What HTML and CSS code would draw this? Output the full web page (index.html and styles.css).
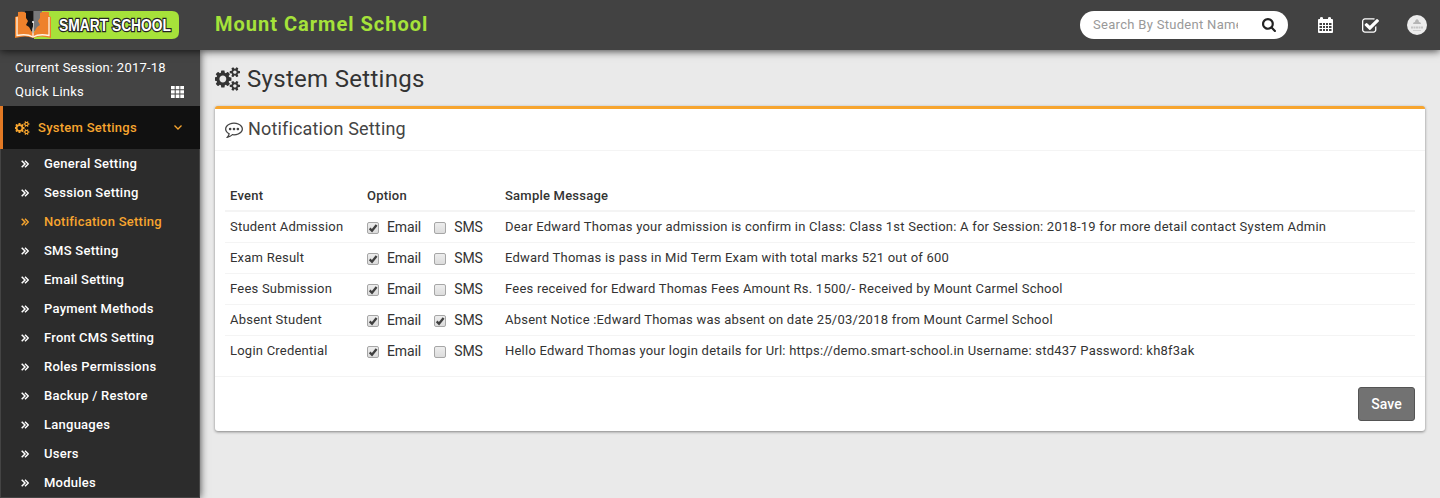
FILE: index.html
```html
<!DOCTYPE html>
<html lang="en">
<head>
<meta charset="utf-8">
<title>System Settings</title>
<link rel="stylesheet" href="styles.css">
</head>
<body>
<svg class="defs" width="0" height="0" aria-hidden="true">
  <symbol id="cogs" viewBox="0 0 1920 1792"><path d="M832 896q0-106-75-181t-181-75-181 75-75 181 75 181 181 75 181-75 75-181zm768 512q0-52-38-90t-90-38-90 38-38 90q0 53 37.500 90.500t90.500 37.500 90.500-37.500 37.500-90.500zm0-1024q0-52-38-90t-90-38-90 38-38 90q0 53 37.500 90.500t90.500 37.500 90.500-37.500 37.500-90.500zm-384 421v185q0 10-7 19.500t-16 10.500l-155 24q-11 35-32 76 34 48 90 115 7 11 7 20 0 12-7 19-23 30-82.500 89.500t-78.500 59.500q-11 0-21-7l-115-90q-37 19-77 31-11 108-23 155-7 24-30 24h-186q-11 0-20-7.500t-10-17.500l-23-153q-34-10-75-31l-118 89q-7 7-20 7-11 0-21-8-144-133-144-160 0-9 7-19 10-14 41-53t47-61q-23-44-35-82l-152-24q-10-1-17-9.500t-7-19.500v-185q0-10 7-19.500t16-10.500l155-24q11-35 32-76-34-48-90-115-7-11-7-20 0-12 7-20 22-30 82-89t79-59q11 0 21 7l115 90q34-18 77-32 11-108 23-154 7-24 30-24h186q11 0 20 7.500t10 17.500l23 153q34 10 75 31l118-89q8-7 20-7 11 0 21 8 144 133 144 160 0 8-7 19-12 16-42 54t-45 60q23 48 34 82l152 23q10 2 17 10.500t7 19.500zm640 533v140q0 16-149 31-12 27-30 52 51 113 51 138 0 4-4 7-122 71-124 71-8 0-46-47t-52-68q-20 2-30 2t-30-2q-14 21-52 68t-46 47q-2 0-124-71-4-3-4-7 0-25 51-138-18-25-30-52-149-15-149-31v-140q0-16 149-31 13-29 30-52-51-113-51-138 0-4 4-7 4-2 35-20t59-34 30-16q8 0 46 46.500t52 67.500q20-2 30-2t30 2q51-71 92-112l6-2q4 0 124 70 4 3 4 7 0 25-51 138 17 23 30 52 149 15 149 31zm0-1024v140q0 16-149 31-12 27-30 52 51 113 51 138 0 4-4 7-122 71-124 71-8 0-46-47t-52-68q-20 2-30 2t-30-2q-14 21-52 68t-46 47q-2 0-124-71-4-3-4-7 0-25 51-138-18-25-30-52-149-15-149-31v-140q0-16 149-31 13-29 30-52-51-113-51-138 0-4 4-7 4-2 35-20t59-34 30-16q8 0 46 46.500t52 67.500q20-2 30-2t30 2q51-71 92-112l6-2q4 0 124 70 4 3 4 7 0 25-51 138 17 23 30 52 149 15 149 31z"/></symbol>
  <symbol id="double-right" viewBox="0 0 8 8"><path d="M.7.7 4 4 .7 7.300M4 .7 7.300 4 4 7.300" fill="none" stroke="currentColor" stroke-width="1.500"/></symbol>
  <symbol id="tick" viewBox="0 0 12 12"><path d="M2.700 6.400 5 8.700 9.600 3" fill="none" stroke="#404040" stroke-width="2.300"/></symbol>
</svg>

<header class="topbar">
  <a class="brand">
    <svg class="logo" width="166" height="30" viewBox="0 0 166 30">
      <path d="M20 1h138q7 0 7 7v14q0 7-7 7H20z" fill="#a6e23a"/>
      <path d="M11 1h8.500v20H11z" fill="#171717"/>
      <path d="M19.500 1H28v20h-8.500z" fill="#78797b"/>
      <path d="M4 2q6-1 8 1v5l2 3-2 4 3 2 4 7 4-7 3-2-2-4 2-3V3q3-2 9-1v4l2 1v21q-11-3-18 0-7-3-18 0V7l3-1z" fill="#ee812b"/>
      <path d="M3 7v18.500q10-2 16 1.500 6-3.500 16-1.500V7M19 12v14" fill="none" stroke="#fff4e5" stroke-width="1.300"/>
      <path d="M16 11h3v8z" fill="#171717"/>
      <circle cx="19" cy="12" r="1" fill="#fff"/>
      <text x="45" y="21" textLength="112" lengthAdjust="spacingAndGlyphs" class="logo-text">SMART SCHOOL</text>
    </svg>
  </a>
  <div class="school">Mount Carmel School</div>
  <div class="tools">
    <div class="search"><span class="search-text">Search By Student Name</span>
      <svg width="14" height="14" viewBox="64 128 1664 1664"><path fill="#222" d="M1216 832q0-185-131.500-316.500t-316.500-131.500-316.500 131.500-131.500 316.500 131.500 316.500 316.500 131.500 316.500-131.500 131.500-316.500zm512 832q0 52-38 90t-90 38q-54 0-90-38l-343-342q-179 124-399 124-143 0-273.500-55.500t-225-150-150-225-55.500-273.500 55.500-273.500 150-225 225-150 273.500-55.500 273.500 55.500 225 150 150 225 55.500 273.500q0 220-124 399l343 343q37 37 37 90z"/></svg>
    </div>
    <svg class="calendar" width="15" height="16" viewBox="0 0 15 16"><path fill="#fff" fill-rule="evenodd" d="M1 2h1V1q0-1 1.500-1T5 1v1h5V1q0-1 1.500-1T13 1v1h1q1 0 1 1v12q0 1-1 1H1q-1 0-1-1V3q0-1 1-1zM1.500 6v2H4V6zM5 6v2h2V6zm3 0v2h2V6zm3 0v2h2.500V6zM1.500 9v2H4V9zM5 9v2h2V9zm3 0v2h2V9zm3 0v2h2.500V9zM1.500 12v2H4v-2zM5 12v2h2v-2zm3 0v2h2v-2zm3 0v2h2.500v-2z"/></svg>
    <svg class="task" width="17" height="15" viewBox="64 128 1664 1408"><path fill="#fff" d="M1472 930v318q0 119-84.500 203.500t-203.500 84.500h-832q-119 0-203.500-84.500t-84.500-203.500v-832q0-119 84.500-203.500t203.500-84.500h832q63 0 117 25 15 7 18 23 3 17-9 29l-49 49q-10 10-23 10-3 0-9-2-23-6-45-6h-832q-66 0-113 47t-47 113v832q0 66 47 113t113 47h832q66 0 113-47t47-113v-254q0-13 9-22l64-64q10-10 23-10 6 0 12 3 20 8 20 29zm231-489l-814 814q-24 24-57 24t-57-24l-430-430q-24-24-24-57t24-57l110-110q24-24 57-24t57 24l263 263 647-647q24-24 57-24t57 24l110 110q24 24 24 57t-24 57z"/></svg>
    <svg class="avatar" width="20" height="20" viewBox="0 0 20 20"><circle cx="10" cy="10" r="10" fill="#ececec"/><path d="M6 9q0-2 2-2 0-2 2-3 2 1 2 3 2 0 2 2z" fill="#b5b5b5"/><path d="M4 12.500h12" stroke="#c4c4c4" stroke-width="1.800" stroke-dasharray="2 .5"/><path d="M6 15.500h8" stroke="#d0d0d0"/></svg>
  </div>
</header>

<div class="shell">
  <aside class="sidebar">
    <div class="session">
      <div class="session-row">Current Session: 2017-18</div>
      <div class="session-row">Quick Links
        <svg width="13" height="12" viewBox="0 0 13 12"><path fill="#fff" d="M0 0h3.700v3.300H0zM4.700 0h3.700v3.300H4.700zM9.300 0H13v3.300H9.300zM0 4.300h3.700v3.300H0zM4.700 4.300h3.700v3.300H4.700zM9.300 4.300H13v3.300H9.300zM0 8.600h3.700V12H0zM4.700 8.600h3.700V12H4.700zM9.300 8.600H13V12H9.300z"/></svg>
      </div>
    </div>
    <div class="group">
      <svg class="group-icon" width="15" height="14"><use href="#cogs"/></svg>
      <span class="group-name">System Settings</span>
      <svg width="8" height="5" viewBox="0 0 8 5"><path d="M.5.5 4 4 7.500.5" fill="none" stroke="currentColor" stroke-width="1.300"/></svg>
    </div>
    <ul class="menu">
      <li><svg width="8" height="8"><use href="#double-right"/></svg>General Setting</li>
      <li><svg width="8" height="8"><use href="#double-right"/></svg>Session Setting</li>
      <li class="current"><svg width="8" height="8"><use href="#double-right"/></svg>Notification Setting</li>
      <li><svg width="8" height="8"><use href="#double-right"/></svg>SMS Setting</li>
      <li><svg width="8" height="8"><use href="#double-right"/></svg>Email Setting</li>
      <li><svg width="8" height="8"><use href="#double-right"/></svg>Payment Methods</li>
      <li><svg width="8" height="8"><use href="#double-right"/></svg>Front CMS Setting</li>
      <li><svg width="8" height="8"><use href="#double-right"/></svg>Roles Permissions</li>
      <li><svg width="8" height="8"><use href="#double-right"/></svg>Backup / Restore</li>
      <li><svg width="8" height="8"><use href="#double-right"/></svg>Languages</li>
      <li><svg width="8" height="8"><use href="#double-right"/></svg>Users</li>
      <li><svg width="8" height="8"><use href="#double-right"/></svg>Modules</li>
    </ul>
  </aside>

  <main class="content">
    <h1 class="page-title"><svg width="26" height="24"><use href="#cogs"/></svg>System Settings</h1>
    <section class="box">
      <h2 class="box-title"><svg width="18" height="18" viewBox="0 0 1792 1792"><path fill="currentColor" d="M640 896q0 53-37.500 90.500t-90.500 37.500-90.500-37.500-37.500-90.500 37.500-90.500 90.500-37.500 90.500 37.500 37.500 90.500zm384 0q0 53-37.500 90.500t-90.500 37.500-90.500-37.500-37.500-90.500 37.500-90.500 90.500-37.500 90.500 37.500 37.500 90.500zm384 0q0 53-37.500 90.500t-90.500 37.500-90.500-37.500-37.500-90.500 37.500-90.500 90.500-37.500 90.500 37.500 37.500 90.500zm-512-512q-204 0-381.500 69.500t-282 187.500-104.500 255q0 112 71.500 213.500t201.500 175.500l87 50-27 96q-24 91-70 172 152-63 275-171l43-38 57 6q69 8 130 8 204 0 381.500-69.500t282-187.500 104.500-255-104.500-255-282-187.500-381.500-69.500zm896 512q0 174-120 321.500t-326 233-450 85.500q-70 0-145-8-198 175-460 242-49 14-114 22h-5q-15 0-27-10.500t-16-27.500v-1q-3-4-.5-12t2-10 4.500-9.500l6-9 7-8.500 8-9q7-8 31-34.500t34.500-38 31-39.500 32.500-51 27-59 26-76q-157-89-247.500-220t-90.500-281q0-174 120-321.500t326-233 450-85.500 450 85.500 326 233 120 321.500z"/></svg>Notification Setting</h2>
      <div class="box-body">
        <div class="row head"><span>Event</span><span>Option</span><span>Sample Message</span></div>
        <div class="row"><span>Student Admission</span><div class="options"><label><i class="check"><svg width="12" height="12"><use href="#tick"/></svg></i>Email</label><label><i class="check"></i>SMS</label></div><span>Dear Edward Thomas your admission is confirm in Class: Class 1st Section: A for Session: 2018-19 for more detail contact System Admin</span></div>
        <div class="row"><span>Exam Result</span><div class="options"><label><i class="check"><svg width="12" height="12"><use href="#tick"/></svg></i>Email</label><label><i class="check"></i>SMS</label></div><span>Edward Thomas is pass in Mid Term Exam with total marks 521 out of 600</span></div>
        <div class="row"><span>Fees Submission</span><div class="options"><label><i class="check"><svg width="12" height="12"><use href="#tick"/></svg></i>Email</label><label><i class="check"></i>SMS</label></div><span>Fees received for Edward Thomas Fees Amount Rs. 1500/- Received by Mount Carmel School</span></div>
        <div class="row"><span>Absent Student</span><div class="options"><label><i class="check"><svg width="12" height="12"><use href="#tick"/></svg></i>Email</label><label><i class="check"><svg width="12" height="12"><use href="#tick"/></svg></i>SMS</label></div><span>Absent Notice :Edward Thomas was absent on date 25/03/2018 from Mount Carmel School</span></div>
        <div class="row"><span>Login Credential</span><div class="options"><label><i class="check"><svg width="12" height="12"><use href="#tick"/></svg></i>Email</label><label><i class="check"></i>SMS</label></div><span>Hello Edward Thomas your login details for Url: https://demo.smart-school.in Username: std437 Password: kh8f3ak</span></div>
      </div>
      <div class="box-footer"><button class="save">Save</button></div>
    </section>
  </main>
</div>
</body>
</html>
```
FILE: styles.css
```css
* { box-sizing: border-box; }
body {
  margin: 0;
  height: 498px;
  overflow: hidden;
  background: #eaeaea;
  color: #333;
  font: 13px/20px Roboto, sans-serif;
  letter-spacing: .225px;
}
svg { display: block; flex: none; fill: currentColor; }
.defs { position: absolute; }

.topbar {
  position: relative;
  z-index: 2;
  display: flex;
  align-items: center;
  height: 50px;
  background: #424242;
  box-shadow: 0 1px 8px rgba(0, 0, 0, .75);
}
.brand { width: 215px; padding-left: 14px; }
.logo-text {
  font: bold 16.5px "Liberation Sans", sans-serif;
  letter-spacing: 0;
  fill: #fff;
  stroke: #222;
  stroke-width: 2.5px;
  paint-order: stroke;
}
.school { padding-bottom: 2px; color: #a6e23a; font-size: 20px; font-weight: 700; letter-spacing: 1px; }
.tools { display: flex; align-items: center; margin-left: auto; padding-right: 13px; }
.search {
  display: flex;
  align-items: center;
  justify-content: space-between;
  width: 208px;
  height: 28px;
  padding: 0 12px 0 13px;
  border-radius: 14px;
  background: #fff;
}
.search-text { width: 145px; overflow: hidden; white-space: nowrap; color: #999; letter-spacing: .3px; }
.calendar { margin-left: 30px; }
.task { margin-left: 29px; }
.avatar { margin-left: 28px; }

.shell { display: flex; height: 448px; }
.sidebar {
  width: 200px;
  flex: none;
  background: #444;
  color: #fff;
  font-weight: 500;
  box-shadow: 0 0 8px rgba(0, 0, 0, .75);
}
.session { height: 56px; padding: 6px 16px 0 15px; font-weight: 400; }
.session-row { display: flex; align-items: center; justify-content: space-between; height: 24px; }
.group {
  display: flex;
  align-items: center;
  height: 43px;
  padding: 0 18px 0 12px;
  border-left: 3px solid #e27924;
  background: #111;
  color: #f7a52f;
}
.group-name { flex: 1; padding-left: 8px; letter-spacing: .27px; }
.menu { margin: 0 1px; padding: 0; list-style: none; background: #2c2c2c; letter-spacing: .25px; }
.menu li { display: flex; align-items: center; gap: 15px; height: 29px; padding-left: 20px; }
.menu .current { color: #f7a52f; }

.content { flex: 1; padding: 16px 15px 0; }
.page-title {
  display: flex;
  align-items: center;
  gap: 6px;
  height: 24px;
  margin: 0 0 16px;
  padding-top: 1px;
  font-size: 24px;
  font-weight: 400;
  letter-spacing: .3px;
}
.box {
  height: 325px;
  border-top: 3px solid #f7a52f;
  border-radius: 3px;
  background: #fff;
  box-shadow: 0 1px 3px rgba(0, 0, 0, .45);
}
.box-title {
  display: flex;
  align-items: center;
  gap: 5px;
  height: 42px;
  margin: 0;
  padding: 0 10px 2px;
  border-bottom: 1px solid #f4f4f4;
  color: #444;
  font-size: 18px;
  font-weight: 400;
  letter-spacing: .16px;
}
.box-body { height: 225px; padding: 29px 10px 0; }
.row {
  display: grid;
  grid-template-columns: 137px 138px 1fr;
  height: 31px;
  padding: 5px 5px 0;
  border-bottom: 1px solid #f4f4f4;
  white-space: nowrap;
}
.row:last-child { border-bottom: 0; }
.head { height: 32px; padding-top: 6px; border-bottom-width: 2px; font-weight: 500; }
.options { display: flex; gap: 13px; font-size: 14px; letter-spacing: -.1px; }
.options label { display: flex; gap: 8px; }
.check {
  width: 12px;
  height: 12px;
  margin-top: 5px;
  border: 1px solid #a6a6a6;
  border-radius: 2px;
  background: linear-gradient(#ededed, #dcdcdc);
}
.check svg { margin: -1px; }
.box-footer { display: flex; justify-content: flex-end; padding: 10px; border-top: 1px solid #f4f4f4; }
.save {
  width: 57px;
  height: 34px;
  padding: 0;
  border: 1px solid #545454;
  border-radius: 3px;
  background: #727272;
  color: #fff;
  font: 500 14px Roboto, sans-serif;
}
```
